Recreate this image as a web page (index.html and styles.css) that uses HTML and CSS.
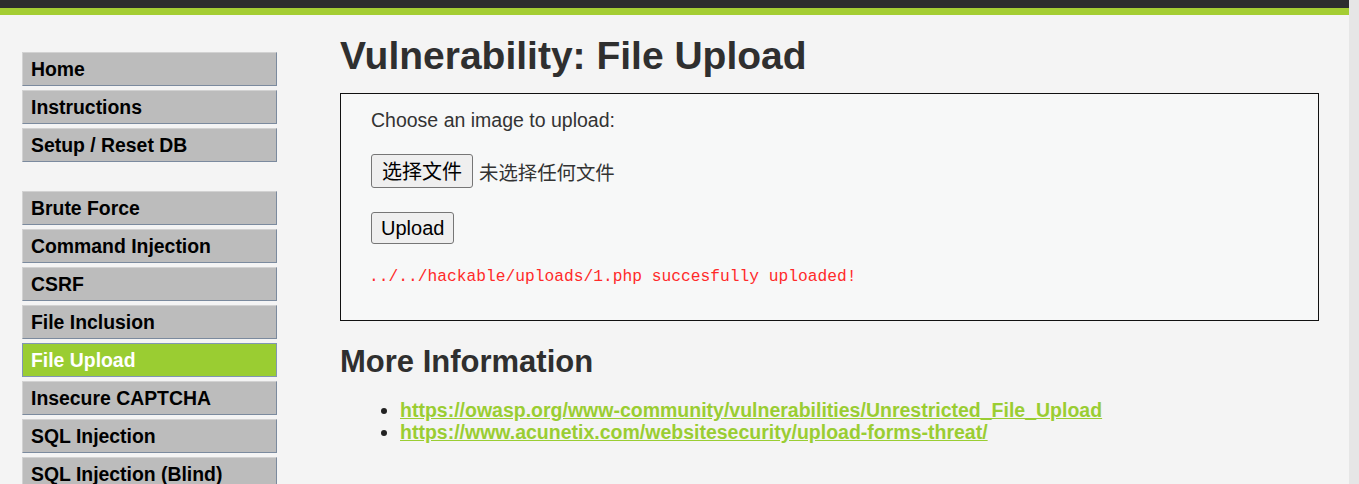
FILE: index.html
```html
<!DOCTYPE html>
<html lang="zh-CN">
<head>
<meta charset="utf-8">
<title>Vulnerability: File Upload</title>
<link rel="stylesheet" href="styles.css">
</head>
<body>
<div class="page">
  <div class="main">
    <div class="topbar"></div>
    <div class="body">
      <nav class="menu">
        <ul class="menu-group">
          <li><a href="#">Home</a></li>
          <li><a href="#">Instructions</a></li>
          <li><a href="#">Setup / Reset DB</a></li>
        </ul>
        <ul class="menu-group">
          <li><a href="#">Brute Force</a></li>
          <li><a href="#">Command Injection</a></li>
          <li><a href="#">CSRF</a></li>
          <li><a href="#">File Inclusion</a></li>
          <li class="selected"><a href="#">File Upload</a></li>
          <li><a href="#">Insecure CAPTCHA</a></li>
          <li><a href="#">SQL Injection</a></li>
          <li><a href="#">SQL Injection (Blind)</a></li>
        </ul>
      </nav>
      <div class="content">
        <h1 class="title">Vulnerability: File Upload</h1>
        <div class="vuln-box">
          <div class="prompt">Choose an image to upload:</div>
          <div class="file-row">
            <button class="btn btn-file" type="button">选择文件</button>
            <span class="file-none">未选择任何文件</span>
          </div>
          <div class="upload-row">
            <button class="btn btn-upload" type="button">Upload</button>
          </div>
          <pre class="result">../../hackable/uploads/1.php succesfully uploaded!</pre>
        </div>
        <h2 class="subtitle">More Information</h2>
        <ul class="links">
          <li><a href="#">https://owasp.org/www-community/vulnerabilities/Unrestricted_File_Upload</a></li>
          <li><a href="#">https://www.acunetix.com/websitesecurity/upload-forms-threat/</a></li>
        </ul>
      </div>
    </div>
  </div>
  <div class="strip"></div>
</div>
</body>
</html>
```

FILE: styles.css
```css
html, body {
  margin: 0;
  padding: 0;
}
body {
  font-family: "Liberation Sans", Arial, "Noto Sans CJK SC", sans-serif;
  background: #f4f4f4;
  overflow: hidden;
}
.page {
  display: flex;
  height: 484px;
}
.main {
  width: 1349px;
  background: #f4f4f4;
}
.strip {
  flex: 1;
  background: #e6e6e6;
}
.topbar {
  height: 8px;
  background: #2d2d2d;
  border-bottom: 7px solid #a4cd33;
}
.body {
  display: flex;
  align-items: flex-start;
}
.menu {
  width: 255px;
  margin: 37px 0 0 22px;
}
.menu-group {
  list-style: none;
  margin: 0;
  padding: 0;
}
.menu-group + .menu-group {
  margin-top: 29px;
}
.menu-group li {
  margin-bottom: 4px;
}
.menu-group a {
  display: block;
  height: 32px;
  line-height: 32px;
  padding-left: 8px;
  background: #bcbcbc;
  border-top: 1px solid #d2d2d2;
  border-left: 1px solid #d2d2d2;
  border-right: 1px solid #7b8a9e;
  border-bottom: 1px solid #7b8a9e;
  color: #000;
  font-size: 19.4px;
  font-weight: bold;
  text-decoration: none;
  white-space: nowrap;
}
.menu-group li.selected a {
  background: #9acd32;
  color: #fff;
  border-color: #8196b4;
}
.content {
  width: 979px;
  margin-left: 63px;
  padding-top: 18px;
}
.title {
  margin: 0 0 15px;
  font-size: 39px;
  line-height: 45px;
  font-weight: bold;
  color: #2f2f2f;
}
.vuln-box {
  box-sizing: border-box;
  width: 979px;
  border: 1px solid #111;
  background: #f7f8f8;
  padding: 15px 30px 33px;
}
.prompt {
  font-size: 19.5px;
  line-height: 22px;
  color: #333;
}
.file-row {
  display: flex;
  align-items: center;
  gap: 6px;
  margin-top: 23px;
}
.file-none {
  font-family: "Noto Sans CJK SC", sans-serif;
  font-size: 19.4px;
  color: #333;
}
.upload-row {
  margin-top: 24px;
}
.btn {
  box-sizing: border-box;
  background: #efefef;
  border: 1px solid #767676;
  border-radius: 3px;
  color: #000;
  padding: 0 10px;
  margin: 0;
}
.btn-file {
  height: 34px;
  font-family: "Noto Sans CJK SC", sans-serif;
  font-size: 20px;
  line-height: 32px;
}
.btn-upload {
  height: 32px;
  padding: 0 9px;
  font-family: "Liberation Sans", Arial, sans-serif;
  font-size: 20px;
  line-height: 30px;
}
.result {
  margin: 23px 0 0 -2px;
  font-family: "Liberation Mono", monospace;
  font-size: 16.25px;
  line-height: 20px;
  color: #ff2a2a;
}
.subtitle {
  margin: 23px 0 0;
  font-size: 31px;
  line-height: 35px;
  font-weight: bold;
  color: #2f2f2f;
}
.links {
  margin: 20px 0 0;
  padding-left: 60px;
  font-size: 19.5px;
  line-height: 22px;
  color: #222;
}
.links a {
  color: #9acd32;
  font-weight: bold;
  text-decoration: underline;
}
```
